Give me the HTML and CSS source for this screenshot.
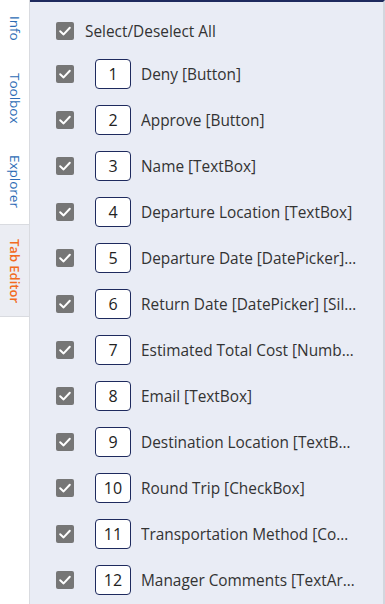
FILE: index.html
```html
<!DOCTYPE html>
<html>
<head>
<meta charset="utf-8">
<link rel="stylesheet" href="styles.css">
</head>
<body>
<div class="app">
  <nav class="tabs">
    <div class="tab">Info</div>
    <div class="tab">Toolbox</div>
    <div class="tab">Explorer</div>
    <div class="tab active">Tab Editor</div>
  </nav>
  <main class="panel">
    <div class="row all">
      <span class="cb"><svg viewBox="0 0 18 18"><path d="M4.2 9.2 L7.6 12.4 L13.8 5.8" /></svg></span>
      <span class="lbl">Select/Deselect All</span>
    </div>
    <div class="row"><span class="cb"><svg viewBox="0 0 18 18"><path d="M4.2 9.2 L7.6 12.4 L13.8 5.8" /></svg></span><span class="num">1</span><span class="lbl">Deny [Button]</span></div>
    <div class="row"><span class="cb"><svg viewBox="0 0 18 18"><path d="M4.2 9.2 L7.6 12.4 L13.8 5.8" /></svg></span><span class="num">2</span><span class="lbl">Approve [Button]</span></div>
    <div class="row"><span class="cb"><svg viewBox="0 0 18 18"><path d="M4.2 9.2 L7.6 12.4 L13.8 5.8" /></svg></span><span class="num">3</span><span class="lbl">Name [TextBox]</span></div>
    <div class="row"><span class="cb"><svg viewBox="0 0 18 18"><path d="M4.2 9.2 L7.6 12.4 L13.8 5.8" /></svg></span><span class="num">4</span><span class="lbl">Departure Location [TextBox]</span></div>
    <div class="row"><span class="cb"><svg viewBox="0 0 18 18"><path d="M4.2 9.2 L7.6 12.4 L13.8 5.8" /></svg></span><span class="num">5</span><span class="lbl">Departure Date [DatePicker] [Silverlight]</span></div>
    <div class="row"><span class="cb"><svg viewBox="0 0 18 18"><path d="M4.2 9.2 L7.6 12.4 L13.8 5.8" /></svg></span><span class="num">6</span><span class="lbl">Return Date [DatePicker] [Silverlight]</span></div>
    <div class="row"><span class="cb"><svg viewBox="0 0 18 18"><path d="M4.2 9.2 L7.6 12.4 L13.8 5.8" /></svg></span><span class="num">7</span><span class="lbl">Estimated Total Cost [NumberBox]</span></div>
    <div class="row"><span class="cb"><svg viewBox="0 0 18 18"><path d="M4.2 9.2 L7.6 12.4 L13.8 5.8" /></svg></span><span class="num">8</span><span class="lbl">Email [TextBox]</span></div>
    <div class="row"><span class="cb"><svg viewBox="0 0 18 18"><path d="M4.2 9.2 L7.6 12.4 L13.8 5.8" /></svg></span><span class="num">9</span><span class="lbl">Destination Location [TextBox]</span></div>
    <div class="row"><span class="cb"><svg viewBox="0 0 18 18"><path d="M4.2 9.2 L7.6 12.4 L13.8 5.8" /></svg></span><span class="num">10</span><span class="lbl">Round Trip [CheckBox]</span></div>
    <div class="row"><span class="cb"><svg viewBox="0 0 18 18"><path d="M4.2 9.2 L7.6 12.4 L13.8 5.8" /></svg></span><span class="num">11</span><span class="lbl">Transportation Method [ComboBox]</span></div>
    <div class="row"><span class="cb"><svg viewBox="0 0 18 18"><path d="M4.2 9.2 L7.6 12.4 L13.8 5.8" /></svg></span><span class="num">12</span><span class="lbl">Manager Comments [TextArea]</span></div>
  </main>
</div>
</body>
</html>
```
FILE: styles.css
```css
* { box-sizing: border-box; }
html, body { margin: 0; padding: 0; }
body {
  width: 385px;
  height: 604px;
  overflow: hidden;
  font-family: "Open Sans", Lato, sans-serif;
  background: #ffffff;
}
.app {
  display: flex;
  height: 604px;
}
.tabs {
  width: 30px;
  flex: none;
  background: #ffffff;
  border-right: 1px solid #d9dbe0;
  display: flex;
  flex-direction: column;
}
.tab {
  writing-mode: vertical-rl;
  font-size: 13.5px;
  color: #2d6cb5;
  padding: 16px 0 16px 0;
  display: flex;
  align-items: center;
  justify-content: flex-start;
  width: 29px;
  line-height: 29px;
}
.tab.active {
  color: #f26a21;
  font-weight: 600;
  font-size: 13px;
  background: #ebedf3;
  border-top: 1px solid #d9dbe0;
  border-bottom: 1px solid #d9dbe0;
  padding: 14px 0 13px 0;
}
.panel {
  flex: 1;
  background: #e9ecf5;
  border-top: 2px solid #1e2a5e;
  border-right: 2px solid #d3d6de;
  padding: 9px 25px 0 26px;
  display: flex;
  flex-direction: column;
  min-width: 0;
}
.row {
  display: flex;
  align-items: center;
  height: 46px;
  min-width: 0;
}
.row.all { height: 40px; }
.cb {
  width: 18px;
  height: 18px;
  flex: none;
  background: #767676;
  border-radius: 2px;
  display: block;
}
.cb svg {
  width: 18px;
  height: 18px;
  display: block;
  fill: none;
  stroke: #ffffff;
  stroke-width: 2;
  stroke-linecap: round;
  stroke-linejoin: round;
}
.all .lbl { margin-left: 11px; }
.num {
  width: 36px;
  height: 30px;
  flex: none;
  margin-left: 21px;
  background: #ffffff;
  border: 1px solid #1e2a5e;
  border-radius: 4px;
  display: flex;
  align-items: center;
  justify-content: center;
  font-size: 16px;
  color: #222222;
}
.lbl {
  margin-left: 10px;
  font-size: 15.4px;
  color: #333333;
  white-space: nowrap;
  overflow: hidden;
  text-overflow: ellipsis;
  min-width: 0;
}
```
